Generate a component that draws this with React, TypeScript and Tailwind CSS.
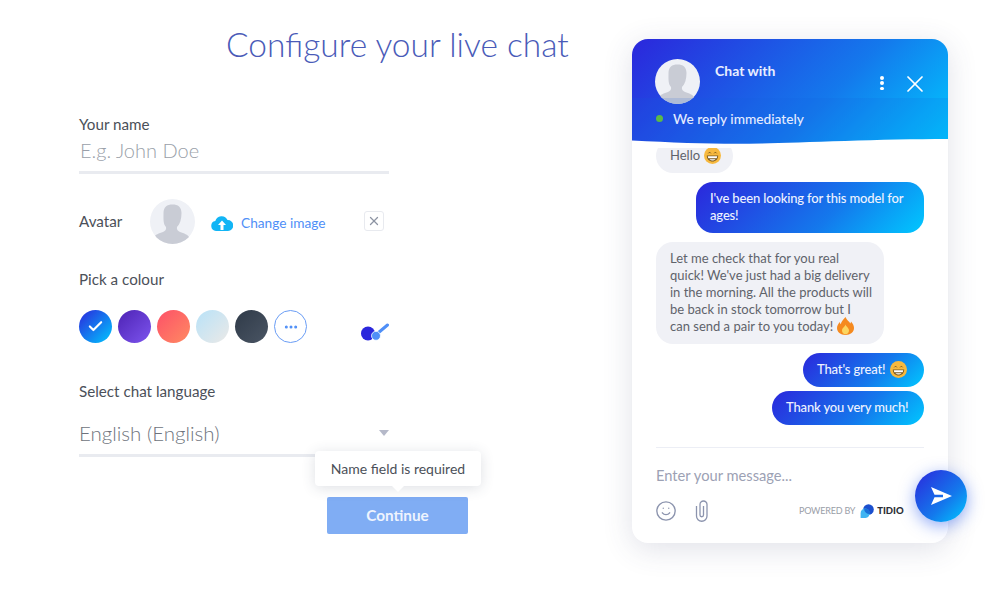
import React from "react";
import { Check, Ellipsis, Smile, X } from "lucide-react";

const chatGradient = "bg-[linear-gradient(135deg,#2b27dc_0%,#1478ec_60%,#00c8ff_100%)]";

function AvatarFace({ size }: { size: number }) {
    return (
        <svg width={size} height={size} viewBox="0 0 45 45" className="block shrink-0">
            <defs>
                <clipPath id={`face-${size}`}>
                    <circle cx="22.5" cy="22.5" r="22.5" />
                </clipPath>
            </defs>
            <g clipPath={`url(#face-${size})`}>
                <rect width="45" height="45" fill="#eff1f6" />
                <path
                    d="M13.5 14c0-6 3.500-8.500 9-8.500s9 2.500 9 8.500c0 6-1.500 11-4.500 14-.5 2 .5 4 3 5 4 1.500 8 2.500 9 5v7H4v-7c1-2.500 5-3.500 9-5 2.500-1 3.500-3 3-5-3-3-2.500-8-2.500-14z"
                    fill="#c9ccd5"
                />
            </g>
        </svg>
    );
}

function GrinEmoji() {
    return (
        <svg width="17" height="17" viewBox="0 0 17 17" className="inline-block shrink-0">
            <circle cx="8.500" cy="8.500" r="8.500" fill="#f7b93e" />
            <path d="M4.300 6.300c.6-1.100 2-1.100 2.600 0M10.100 6.300c.6-1.100 2-1.100 2.600 0" stroke="#7a5a20" strokeWidth="1" fill="none" />
            <path d="M2.800 8.400h11.400c0 3.700-2.500 6-5.700 6s-5.700-2.300-5.700-6z" fill="#7a5a20" />
            <path d="M3.800 9.300h9.400c-.1 1-.3 1.500-.6 2H4.400c-.3-.5-.5-1-.6-2zM5.400 12.300h6.200c-.8.800-1.900 1.200-3.100 1.200s-2.300-.4-3.100-1.200z" fill="#fff" />
        </svg>
    );
}

function FireEmoji() {
    return (
        <svg width="17" height="18" viewBox="0 0 17 18" className="-my-[4px] inline-block shrink-0 align-[0px]">
            <path d="M8.500 0c1 3 4 4.500 4.800 6.500.5-.5.700-1.200.7-2 2 2.200 3 4.500 3 6.500 0 4-3.500 7-8.500 7S0 15 0 11c0-2.500 1.500-4.500 2.800-6 .1 1 .4 1.800 1 2.300C4.200 4.500 6.500 2.500 8.500 0z" fill="#f58a1f" />
            <path d="M8.500 7.500c.5 2 3.500 3.300 3.500 6 0 2.300-1.600 3.800-3.500 3.800S5 15.800 5 13.500c0-2.500 2.800-3.500 3.500-6z" fill="#fcd660" />
        </svg>
    );
}

function TidioLogo() {
    return (
        <svg width="14" height="14" viewBox="0 0 14 14" className="block">
            <circle cx="8.500" cy="5.500" r="5.300" fill="#1b4fce" />
            <path d="M5.500 4.500a4.800 4.800 0 0 1 0 9.500H.6V9.300a4.800 4.800 0 0 1 4.900-4.800z" fill="#40b4f2" />
            <path d="M5.500 4.500a4.800 4.800 0 0 1 4.600 5.500 5.300 5.300 0 0 1-6-5.300c.4-.1.900-.2 1.400-.2z" fill="#1a6fd8" />
        </svg>
    );
}

function Bubble({ children, mine, className }: { children: React.ReactNode; mine?: boolean; className?: string }) {
    const skin = mine ? `${chatGradient} text-[#eef2ff] self-end tracking-[-0.15px]` : "bg-[#f0f1f6] text-[#5f636b] self-start";
    return <div className={`rounded-[17px] pl-[14px] pt-[8px] pb-[9px] text-[13px] leading-[17px] ${skin} ${className ?? ""}`}>{children}</div>;
}

function ChatWidget() {
    return (
        <div className="relative mt-[39px] flex h-[504px] w-[316px] flex-col rounded-[16px] bg-white font-['Lato',sans-serif] shadow-[0_6px_30px_rgba(60,70,110,0.16)]">
            <div className={`relative h-[105px] shrink-0 overflow-hidden rounded-t-[16px] ${chatGradient}`}>
                <div className="flex pl-[23px] pt-[20px]">
                    <AvatarFace size={45} />
                    <span className="ml-[15px] mt-[3px] text-[14px] leading-[18px] font-bold whitespace-nowrap text-[#e9eeff]">Chat with</span>
                    <div className="ml-[105px] mt-[17px] flex h-[14px] w-[3.500px] flex-col justify-between">
                        <span className="size-[3.500px] rounded-full bg-white" />
                        <span className="size-[3.500px] rounded-full bg-white" />
                        <span className="size-[3.500px] rounded-full bg-white" />
                    </div>
                    <X size={28} strokeWidth={1.500} className="ml-[17px] mt-[11px] shrink-0 text-white" />
                </div>
                <div className="absolute inset-x-0 top-[59px] h-[46px] bg-[#1560e0]/15" />
                <div className="absolute left-[23.500px] top-[76px] size-[7px] rounded-full bg-[#5cb946]" />
                <span className="absolute left-[41px] top-[71px] text-[13.700px] leading-[18px] font-medium text-[#e4ebff]">We reply immediately</span>
                <svg width="316" height="105" viewBox="0 0 316 105" className="absolute inset-0">
                    <path d="M0 101.500C50 104 90 105.500 130 104.500S250 100 316 100V105H0Z" fill="#fff" />
                </svg>
            </div>

            <div className="mt-[4px] flex h-[299px] flex-col justify-end gap-[9px] overflow-hidden px-[24px] pb-[22px]">
                <Bubble className="flex w-[77px] shrink-0 items-center gap-[4px] pr-[14px] pb-[8px]">
                    Hello <GrinEmoji />
                </Bubble>
                <Bubble mine className="w-[228px] shrink-0 pr-[14px] font-medium">I've been looking for this model for ages!</Bubble>
                <Bubble className="w-[228px] shrink-0 pr-[12px]">
                    Let me check that for you real quick! We've just had a big delivery in the morning. All the products will be back in stock tomorrow but I can send a pair to you today! <FireEmoji />
                </Bubble>
                <div className="flex shrink-0 flex-col gap-[4px]">
                    <Bubble mine className="flex w-[121px] items-center gap-[5px] pr-[13px] pb-[8px] font-medium whitespace-nowrap">
                        That's great! <GrinEmoji />
                    </Bubble>
                    <Bubble mine className="w-[152px] pb-[8px] font-medium whitespace-nowrap">Thank you very much!</Bubble>
                </div>
            </div>

            <div className="mx-[24px] border-t border-[#eceef5] pt-[17px]">
                <p className="text-[14.700px] leading-[20px] text-[#9ca1b4]">Enter your message...</p>
                <div className="mt-[15px] flex items-center">
                    <Smile size={22} strokeWidth={1.500} className="-ml-[1px] text-[#8c94ae]" />
                    <svg width="14" height="22" viewBox="0 0 14 22" fill="none" className="ml-[18px] text-[#8c94ae]">
                        <path d="M1.500 6V16a5.250 5.250 0 0 0 10.500 0V4.500a3.500 3.500 0 0 0-7 0V15a1.750 1.750 0 0 0 3.500 0V6" stroke="currentColor" strokeWidth="1.300" />
                    </svg>
                    <span className="ml-[90px] text-[9px] tracking-[-0.2px] text-[#9a9ea8]">POWERED BY</span>
                    <span className="ml-[5px]"><TidioLogo /></span>
                    <span className="ml-[3px] text-[9.500px] font-black text-[#2c2f36]">TIDIO</span>
                </div>
            </div>

            <button className={`absolute left-[283px] top-[431px] flex size-[52px] items-center justify-center rounded-full ${chatGradient} shadow-[0_4px_16px_rgba(40,90,240,0.5)]`}>
                <svg width="21" height="18" viewBox="0 0 21 18"><path d="M0 0 21 9 0 18 3.500 10.200H12V7.800H3.500Z" fill="#fff" /></svg>
            </button>
        </div>
    );
}

const swatches = [
    "bg-[linear-gradient(135deg,#2b27dc,#00c8ff)]",
    "bg-[linear-gradient(135deg,#4d22b4,#7d55ee)]",
    "bg-[linear-gradient(135deg,#fd5068,#ff8a62)]",
    "bg-[linear-gradient(135deg,#b8e2f8,#ebe9e7)]",
    "bg-[linear-gradient(135deg,#2f3a48,#4a5564)]",
];

export default function App() {
    return (
        <div className="flex h-[589px] w-[1001px] overflow-hidden bg-white font-['Lato',sans-serif]">
            <div className="w-[632px] shrink-0 pl-[79px]">
                <h1 className="mt-[20px] ml-[147px] text-[33.500px] leading-[48px] font-light whitespace-nowrap text-[#4a5bb8]">Configure your live chat</h1>

                <div className="relative mt-[46px] w-[310px] text-[#4b5059]">
                    <label className="block text-[15.200px] leading-[20px]">Your name</label>
                    <p className="mt-[2px] pl-px text-[20px] leading-[28px] font-light text-[#9a9fa9]">E.g. John Doe</p>
                    <div className="mt-[7px] h-[3px] bg-[#e9ebf0]" />

                    <div className="mt-[25px] flex h-[45px] items-center">
                        <span className="w-[71px] text-[15.200px]">Avatar</span>
                        <AvatarFace size={45} />
                        <svg width="22" height="16" viewBox="0 0 22 16" className="ml-[16px] mt-[2px]">
                            <path d="M5 16A5 5 0 0 1 4.300 6.100 6.500 6.500 0 0 1 16.500 5 5.500 5.500 0 0 1 17 16Z" fill="#12b5f5" />
                            <path d="M11 5.500 15 10H12.500V15H9.500V10H7Z" fill="#fff" />
                        </svg>
                        <span className="ml-[8px] mt-[3px] text-[13.700px] whitespace-nowrap text-[#4f8ff7]">Change image</span>
                        <button className="ml-[38px] flex size-[20px] shrink-0 -translate-y-[1px] items-center justify-center rounded-[3px] border border-[#e8eaef]">
                            <X size={14} strokeWidth={2.200} className="text-[#8d94a3]" />
                        </button>
                    </div>

                    <label className="mt-[25px] block text-[15.200px] leading-[20px]">Pick a colour</label>
                    <div className="mt-[21px] flex items-center gap-[6px]">
                        {swatches.map((s, i) => (
                            <span key={s} className={`flex size-[33px] shrink-0 items-center justify-center rounded-full ${s}`}>
                                {i === 0 && <Check size={17} strokeWidth={3} className="text-white" />}
                            </span>
                        ))}
                        <span className="flex size-[33px] shrink-0 items-center justify-center rounded-full border border-[#6a9df5]">
                            <Ellipsis size={16} strokeWidth={2.500} className="text-[#4f8ff7]" />
                        </span>
                        <svg width="28" height="18" viewBox="0 0 28 18" className="ml-[48px] mt-[11px] shrink-0">
                            <circle cx="7" cy="10.500" r="7" fill="#2b27dc" />
                            <path d="M26.500 2 17 10" stroke="#4f8ff7" strokeWidth="3" strokeLinecap="round" />
                            <circle cx="15" cy="12.800" r="4.500" fill="#4f8ff7" stroke="#fff" strokeWidth=".8" />
                        </svg>
                    </div>

                    <label className="mt-[38px] block text-[15.200px] leading-[20px]">Select chat language</label>
                    <div className="mt-[18px] flex items-center justify-between">
                        <span className="text-[20.500px] leading-[28px] font-light text-[#6e737c]">English (English)</span>
                        <span className="h-0 w-0 border-x-[5px] border-t-[6px] border-x-transparent border-t-[#b5b9c9]" />
                    </div>
                    <div className="mt-[7px] h-[3px] bg-[#e9ebf0]" />

                    <button className="mt-[40px] ml-[248px] block h-[37px] w-[141px] rounded-[2px] bg-[#80adf4] pb-px text-[15.300px] font-bold text-[#eef4fe]">Continue</button>
                    <div className="absolute left-[236px] top-[337px] flex h-[35px] w-[166px] items-center justify-center rounded-[4px] bg-white text-[14px] whitespace-nowrap text-[#4b5059] shadow-[0_2px_14px_rgba(50,60,90,0.16)]">
                        Name field is required
                        <span className="absolute left-[77px] top-[35px] h-0 w-0 border-x-[6px] border-t-[6px] border-x-transparent border-t-white" />
                    </div>
                </div>
            </div>

            <ChatWidget />
        </div>
    );
}
